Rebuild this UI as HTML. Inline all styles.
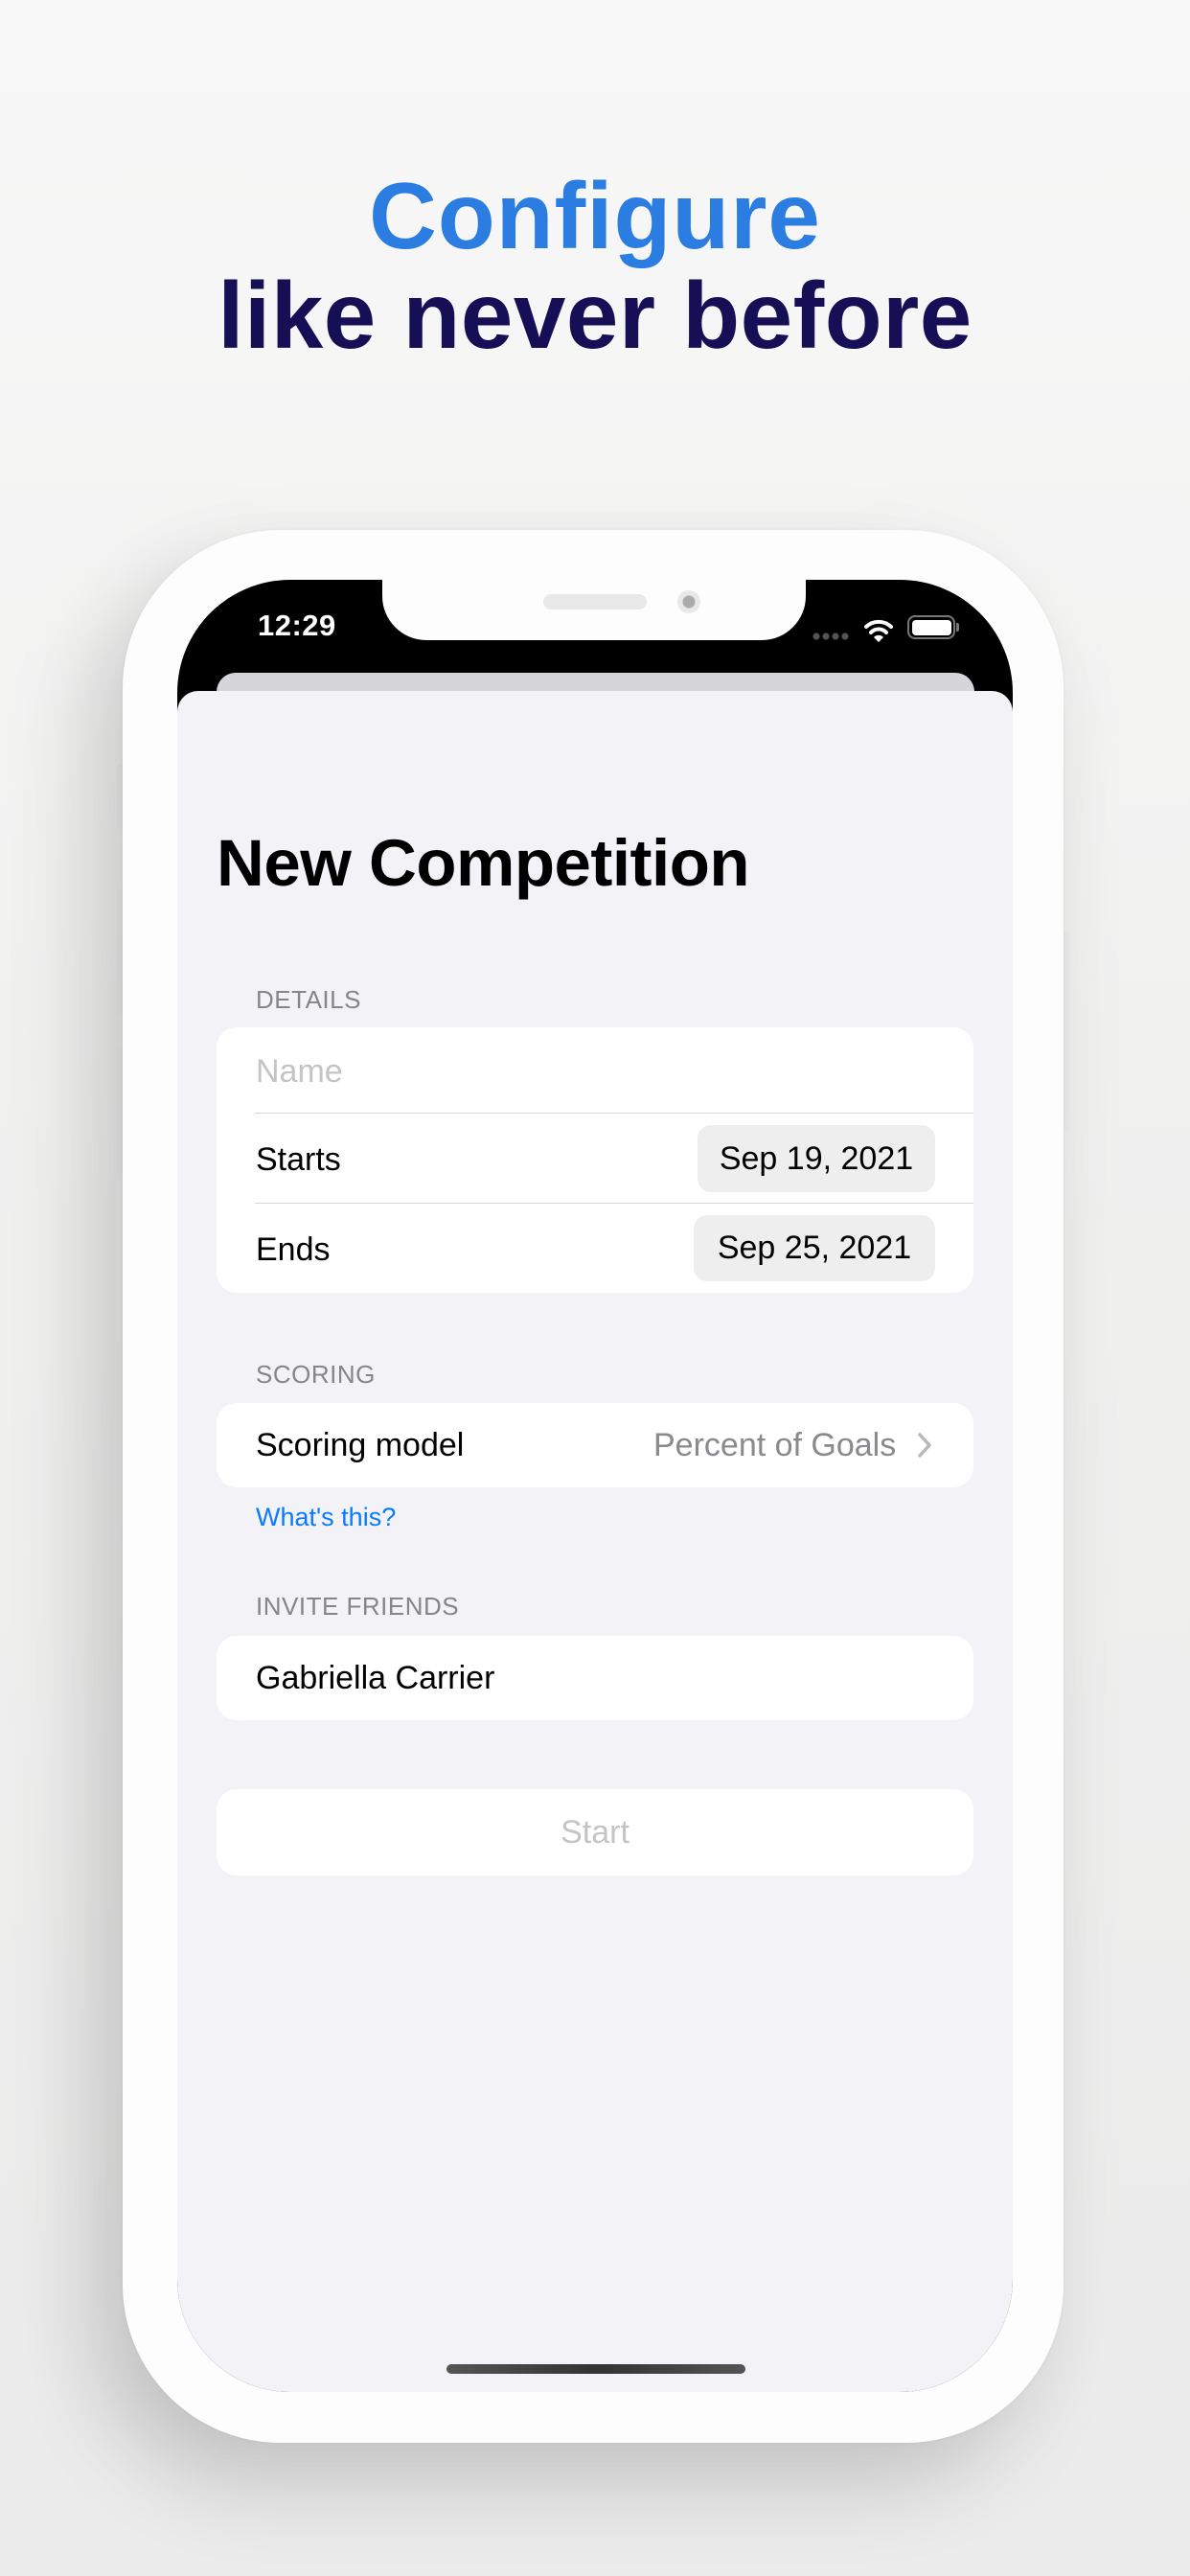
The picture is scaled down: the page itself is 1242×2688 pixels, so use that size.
<!DOCTYPE html>
<html><head><meta charset="utf-8"><style>
*{margin:0;padding:0;box-sizing:border-box}
body{width:1242px;height:2688px;overflow:hidden;position:relative;font-family:"Liberation Sans",sans-serif;background:linear-gradient(180deg,#f8f8f8 0%,#f1f1f0 40%,#ebebeb 100%)}
.h{position:absolute;left:0;width:1242px;text-align:center;font-weight:bold;font-size:98px;line-height:1}
.abs{position:absolute}
.frame{left:128px;top:553px;width:982px;height:1996px;border-radius:165px;background:#fdfdfd;box-shadow:-30px 40px 90px rgba(0,0,0,0.18),0 0 4px rgba(0,0,0,0.05)}
.screen{left:185px;top:605px;width:872px;height:1891px;border-radius:118px;background:#000;overflow:hidden}
.sheet{left:0;top:116px;width:872px;height:1800px;background:#f2f2f7;border-radius:22px 22px 0 0}
.back{left:41px;top:97px;width:791px;height:40px;background:#d5d5da;border-radius:20px}
.notch{left:214px;top:-10px;width:442px;height:73px;background:#fdfdfd;border-radius:0 0 46px 46px}
.lbl{position:absolute;left:82px;font-size:26px;color:#85858a;letter-spacing:0.5px}
.card{position:absolute;left:41px;width:790px;background:#fff;border-radius:21px}
.row{position:absolute;left:41px;font-size:34px;color:#000}
.pill{position:absolute;background:#eeeeef;border-radius:14px;font-size:34px;color:#000;text-align:center}
.sep{position:absolute;left:40px;right:0;height:1px;background:#d8d8db}
</style></head><body>
<div class="h" style="top:176px;color:#2b7de1;letter-spacing:1px">Configure</div>
<div class="h" style="top:280px;color:#160f55;letter-spacing:0.5px">like never before</div>

<div class="abs" style="left:122px;top:797px;width:6px;height:68px;background:#eee;border-radius:3px"></div>
<div class="abs" style="left:122px;top:928px;width:6px;height:131px;background:#eee;border-radius:3px"></div>
<div class="abs" style="left:122px;top:1093px;width:6px;height:132px;background:#eee;border-radius:3px"></div>
<div class="abs" style="left:1110px;top:971px;width:6px;height:211px;background:#eee;border-radius:3px"></div>

<div class="abs frame"></div>
<div class="abs screen">
  <div class="abs notch"></div>
  <div class="abs" style="left:382px;top:15px;width:108px;height:16px;background:#e8e8e8;border-radius:8px"></div>
  <div class="abs" style="left:522px;top:11px;width:24px;height:24px;background:#e8e8e8;border-radius:12px"></div>
  <div class="abs" style="left:522px;top:11px;width:24px;height:24px;border-radius:12px;background:radial-gradient(circle,#aaa 0 6px,transparent 7px)"></div>
  <div class="abs" style="left:84px;top:30px;color:#fff;font-size:31px;font-weight:bold;letter-spacing:0.5px">12:29</div>
  <div class="abs" style="left:662px;top:55px;width:40px;height:8px;background:radial-gradient(circle,#555 3px,transparent 4px) 0 0/10px 8px repeat-x"></div>
  <svg class="abs" style="left:717px;top:40px" width="30" height="26" viewBox="0 0 30 26"><path d="M2 9 A19 19 0 0 1 28 9" stroke="#fff" stroke-width="4" fill="none" stroke-linecap="round"/><path d="M7 15 A11 11 0 0 1 23 15" stroke="#fff" stroke-width="4" fill="none" stroke-linecap="round"/><path d="M10 20 L15 25 L20 20 A7 7 0 0 0 10 20Z" fill="#fff"/></svg>
  <div class="abs" style="left:762px;top:37px;width:50px;height:25px;border:2.5px solid #777;border-radius:8px;padding:2.5px"><div style="width:100%;height:100%;background:#fff;border-radius:4px"></div></div>
  <div class="abs" style="left:813px;top:45px;width:3px;height:9px;background:#777;border-radius:0 2px 2px 0"></div>
  <div class="abs back"></div>
  <div class="abs sheet">
    <div class="abs" style="left:41px;top:140px;font-size:69px;font-weight:bold;color:#000;letter-spacing:-0.5px">New Competition</div>
    <div class="lbl" style="top:307px">DETAILS</div>
    <div class="card" style="top:351px;height:277px">
      <div class="row" style="top:27px;color:#c4c4c6">Name</div>
      <div class="sep" style="top:89px"></div>
      <div class="row" style="top:119px">Starts</div>
      <div class="pill" style="left:502px;top:102px;width:248px;height:70px;line-height:70px">Sep 19, 2021</div>
      <div class="sep" style="top:183px"></div>
      <div class="row" style="top:213px">Ends</div>
      <div class="pill" style="left:498px;top:196px;width:252px;height:69px;line-height:69px">Sep 25, 2021</div>
    </div>
    <div class="lbl" style="top:698px">SCORING</div>
    <div class="card" style="top:743px;height:88px">
      <div class="row" style="top:25px">Scoring model</div>
      <div class="row" style="left:456px;top:25px;color:#8a8a8e">Percent of Goals</div>
      <svg class="abs" style="left:731px;top:30px" width="16" height="28" viewBox="0 0 16 28"><path d="M3 3 L13 14 L3 25" stroke="#b8b8bc" stroke-width="3.5" fill="none" stroke-linecap="round" stroke-linejoin="round"/></svg>
    </div>
    <div class="abs" style="left:82px;top:847px;font-size:27px;color:#0a7aff">What's this?</div>
    <div class="lbl" style="top:940px">INVITE FRIENDS</div>
    <div class="card" style="top:986px;height:88px">
      <div class="row" style="top:25px">Gabriella Carrier</div>
    </div>
    <div class="card" style="top:1146px;height:90px;text-align:center;font-size:34px;color:#c4c4c6;line-height:90px">Start</div>
    <div class="abs" style="left:281px;top:1746px;width:312px;height:10px;border-radius:5px;background:linear-gradient(90deg,#555,#333,#555)"></div>
  </div>
</div>
</body></html>
